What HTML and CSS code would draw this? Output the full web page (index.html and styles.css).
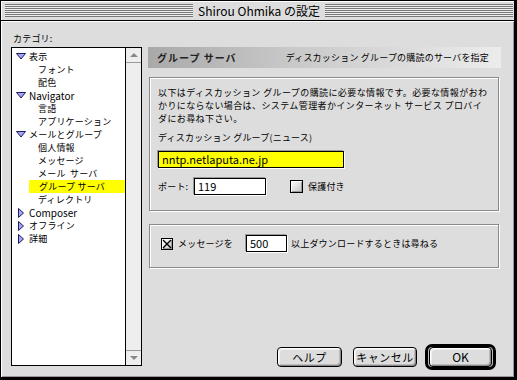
FILE: index.html
```html
<!DOCTYPE html>
<html lang="ja">
<head>
    <meta charset="utf-8">
    <title>Shirou Ohmika の設定</title>
    <link rel="stylesheet" href="styles.css">
</head>
<body>
    <div class="window">
        <div class="title-bar">
            <div class="stripes"></div>
            <div class="title">Shirou Ohmika の設定</div>
            <div class="stripes"></div>
        </div>

        <div class="content">
            <div class="category-label">カテゴリ:</div>

            <div class="columns">
                <div class="category-box">
                    <ul class="category-list">
                        <li class="top"><svg class="twisty" width="10" height="7" viewBox="0 0 10 7"><path d="M0.5 0.5H9.5L5 6Z"/></svg>表示</li>
                        <li class="sub"><span>フォント</span></li>
                        <li class="sub"><span>配色</span></li>
                        <li class="top latin"><svg class="twisty" width="10" height="7" viewBox="0 0 10 7"><path d="M0.5 0.5H9.5L5 6Z"/></svg>Navigator</li>
                        <li class="sub"><span>言語</span></li>
                        <li class="sub"><span>アプリケーション</span></li>
                        <li class="top"><svg class="twisty" width="10" height="7" viewBox="0 0 10 7"><path d="M0.5 0.5H9.5L5 6Z"/></svg>メールとグループ</li>
                        <li class="sub"><span>個人情報</span></li>
                        <li class="sub"><span>メッセージ</span></li>
                        <li class="sub"><span>メール&nbsp; サーバ</span></li>
                        <li class="sub selected"><span>グループ サーバ</span></li>
                        <li class="sub"><span>ディレクトリ</span></li>
                        <li class="top latin"><svg class="twisty" width="10" height="10" viewBox="0 0 10 10"><path d="M2.5 0.5V9.5L7.5 5Z"/></svg>Composer</li>
                        <li class="top"><svg class="twisty" width="10" height="10" viewBox="0 0 10 10"><path d="M2.5 0.5V9.5L7.5 5Z"/></svg>オフライン</li>
                        <li class="top"><svg class="twisty" width="10" height="10" viewBox="0 0 10 10"><path d="M2.5 0.5V9.5L7.5 5Z"/></svg>詳細</li>
                    </ul>
                    <div class="scrollbar">
                        <div class="scroll-arrow up"></div>
                        <div class="scroll-track"></div>
                        <div class="scroll-arrow down"></div>
                    </div>
                </div>

                <div class="panel">
                    <div class="panel-header">
                        <span class="panel-name">グループ サーバ</span>
                        <span class="panel-desc">ディスカッション グループの購読のサーバを指定</span>
                    </div>

                    <div class="group server-group">
                        <p class="note">以下はディスカッション グループの購読に必要な情報です。必要な情報がおわ<br>かりにならない場合は、システム管理者かインターネット サービス プロバイ<br>ダにお尋ね下さい。</p>
                        <div class="field-label">ディスカッション グループ(ニュース)</div>
                        <div class="text-field server-field">nntp.netlaputa.ne.jp</div>
                        <div class="field-row port-row">
                            <span class="port-label">ポート:</span>
                            <div class="text-field port-field">119</div>
                            <span class="checkbox"></span>
                            <span class="check-label">保護付き</span>
                        </div>
                    </div>

                    <div class="group download-group">
                        <div class="field-row">
                            <span class="checkbox checked"><svg width="10" height="10" viewBox="0 0 10 10"><path d="M1 1L9 9M9 1L1 9"/></svg></span>
                            <span class="check-label msg-label">メッセージを</span>
                            <div class="text-field count-field">500</div>
                            <span class="after-label">以上ダウンロードするときは尋ねる</span>
                        </div>
                    </div>

                    <div class="buttons">
                        <div class="button">ヘルプ</div>
                        <div class="button cancel">キャンセル</div>
                        <div class="default-ring">
                            <div class="button ok">OK</div>
                        </div>
                    </div>
                </div>
            </div>
        </div>
    </div>
</body>
</html>
```

FILE: styles.css
```css
* {
    margin: 0;
    padding: 0;
    box-sizing: border-box;
}

body {
    font-family: "Noto Sans CJK JP", sans-serif;
    font-size: 9px;
    letter-spacing: 0.2px;
    color: #000;
    background: #fff;
}

.window {
    width: 517px;
    height: 380px;
    border: 1px solid #000;
    border-right-width: 3px;
    border-bottom-width: 3px;
    background: #dddddd;
}

.title-bar {
    height: 20px;
    display: flex;
    align-items: flex-start;
    padding: 3px 1px 0 4px;
    border-bottom: 1px solid #000;
    box-shadow: inset 1px 1px 0 #fff;
}

.stripes {
    flex: 1;
    height: 13px;
    background: repeating-linear-gradient(to bottom, #777 0 1px, #eee 1px 2px);
}

.title {
    padding: 0 5px;
    font-size: 12px;
    letter-spacing: 0;
    line-height: 13px;
    white-space: nowrap;
}

.content {
    height: 356px;
    padding: 10px 13px 7px 10px;
    box-shadow: inset 1px 1px 0 #fff, inset -1px -1px 0 #999;
}

.category-label {
    height: 16px;
    line-height: 16px;
    padding-left: 2px;
}

.columns {
    display: flex;
    gap: 6px;
}

/* category list */

.category-box {
    width: 131px;
    height: 319px;
    border: 1px solid #000;
    background: #fff;
    display: flex;
}

.category-list {
    flex: 1;
    list-style: none;
    padding-top: 2px;
}

.category-list li {
    height: 13px;
    line-height: 13px;
    white-space: nowrap;
}

.category-list .latin {
    font-size: 10px;
    letter-spacing: 0;
}

.category-list .top {
    display: flex;
    align-items: center;
    padding-left: 4px;
}

.twisty {
    margin-right: 3px;
    flex: none;
}

.twisty path {
    fill: #a4a4f4;
    stroke: #1c1c5c;
    stroke-width: 1;
    stroke-linejoin: round;
}

.category-list .sub span {
    display: block;
    margin-left: 17px;
    padding-left: 9px;
}

.category-list .selected span {
    background: #ffff00;
    padding-left: 10px;
}

.scrollbar {
    width: 16px;
    border-left: 1px solid #000;
    background: #eeeeee;
    display: flex;
    flex-direction: column;
}

.scroll-track {
    flex: 1;
}

.scroll-arrow {
    height: 15px;
    display: flex;
    align-items: center;
    justify-content: center;
}

.scroll-arrow.up {
    border-bottom: 1px solid #999;
}

.scroll-arrow.down {
    border-top: 1px solid #999;
}

.scroll-arrow::after {
    content: '';
    border-left: 4px solid transparent;
    border-right: 4px solid transparent;
}

.scroll-arrow.up::after {
    border-bottom: 4px solid #888;
}

.scroll-arrow.down::after {
    border-top: 4px solid #888;
}

/* right panel */

.panel {
    width: 353px;
    height: 323px;
    display: flex;
    flex-direction: column;
}

.panel-header {
    height: 21px;
    display: flex;
    align-items: center;
    justify-content: space-between;
    padding: 0 12px 0 9px;
    background: linear-gradient(to right, #a9a9a9, #c8c8c8 40%, #ececec);
    white-space: nowrap;
}

.panel-name {
    font-size: 10px;
    font-weight: bold;
    color: #222;
    letter-spacing: 1px;
}

.group {
    width: 350px;
    margin-left: 1px;
    border: 1px solid #8a8a8a;
    box-shadow: inset 1px 1px 0 #fff, 1px 1px 0 #fff;
}

.server-group {
    height: 134px;
    margin-top: 9px;
    padding: 8px 8px 0 8px;
}

.note {
    line-height: 13px;
    letter-spacing: 0.4px;
    white-space: nowrap;
}

.field-label {
    margin-top: 6px;
    line-height: 13px;
}

.text-field {
    height: 17px;
    line-height: 15px;
    padding-left: 3px;
    background: #fff;
    border: 1px solid #000;
    box-shadow: -1px -1px 0 #999, 1px 1px 0 #fff;
    font-size: 11px;
    letter-spacing: 0;
}

.server-field {
    width: 186px;
    margin-top: 7px;
    background: #ffff00;
}

.field-row {
    display: flex;
    align-items: center;
    height: 17px;
    white-space: nowrap;
}

.port-row {
    margin-top: 10px;
}

.port-label {
    width: 36px;
}

.port-field {
    width: 72px;
}

.checkbox {
    width: 13px;
    height: 13px;
    border: 1px solid #000;
    background: linear-gradient(135deg, #fff, #c4c4c4);
    box-shadow: inset 1px 1px 0 #fff, inset -1px -1px 0 #999;
    display: flex;
    align-items: center;
    justify-content: center;
    flex: none;
}

.port-row .checkbox {
    margin-left: 24px;
}

.check-label {
    margin-left: 5px;
}

.download-group {
    height: 44px;
    margin-top: 13px;
    padding: 10px 11px 0 11px;
}

.checkbox.checked {
    width: 12px;
    height: 12px;
}

.checkbox svg path {
    stroke: #000;
    stroke-width: 1.4;
}

.msg-label {
    width: 68px;
}

.count-field {
    width: 41px;
}

.after-label {
    margin-left: 4px;
}

/* buttons */

.buttons {
    margin-top: auto;
    display: flex;
    justify-content: flex-end;
    align-items: center;
    padding-right: 5px;
}

.button {
    width: 65px;
    height: 20px;
    line-height: 18px;
    text-align: center;
    font-size: 11px;
    letter-spacing: 0.5px;
    border: 1px solid #000;
    border-radius: 4px;
    background: #dddddd;
    box-shadow: inset 1px 1px 0 #fff, inset -1px -1px 0 #888, inset 2px 2px 0 #eee, inset -2px -2px 0 #bbb;
    white-space: nowrap;
}

.cancel {
    width: 64px;
    margin-left: 11px;
}

.default-ring {
    margin-left: 8px;
    border: 3px solid #000;
    border-radius: 7px;
    padding: 0 1px;
    background: #bbb;
}

.ok {
    width: 63px;
    font-size: 12px;
    letter-spacing: 0;
}
```
